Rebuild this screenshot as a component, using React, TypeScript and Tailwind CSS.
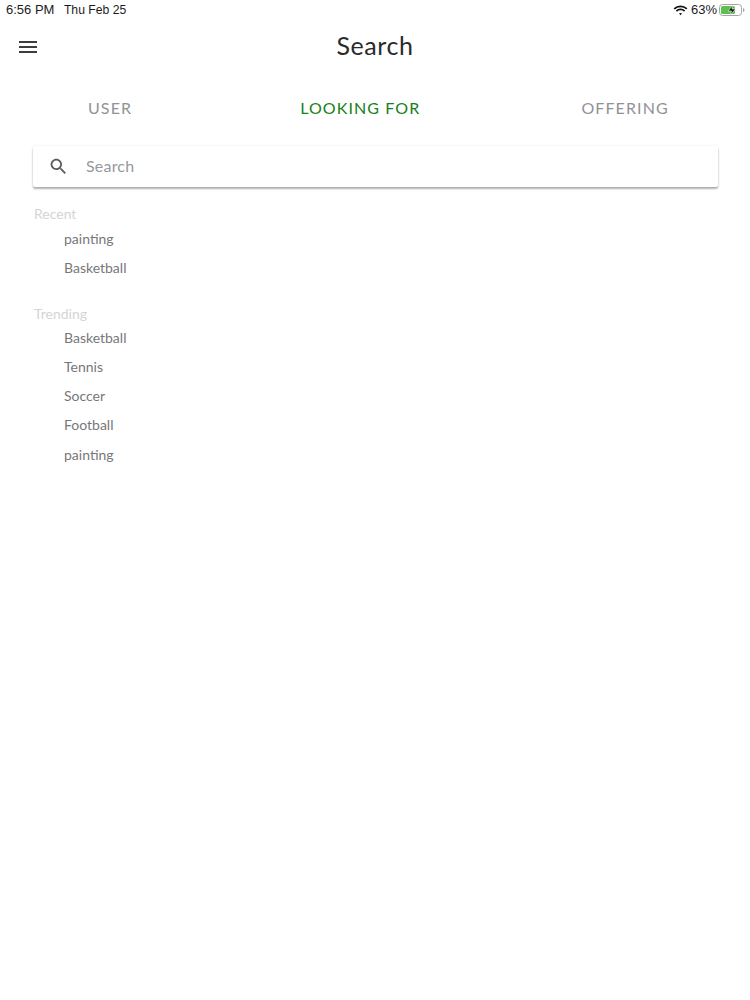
const recent = ["painting", "Basketball"];
const trending = ["Basketball", "Tennis", "Soccer", "Football", "painting"];

function WifiIcon() {
  return (
    <svg width="15" height="11" viewBox="0 0 15 11" fill="#111">
      <path d="M7.5 2.2c2.2 0 4.2.9 5.7 2.3l1.2-1.3A10 10 0 0 0 7.5.4 10 10 0 0 0 .6 3.2l1.2 1.3a8.200 8.200 0 0 1 5.700-2.300z" />
      <path d="M7.500 5.300c1.300 0 2.500.5 3.500 1.400l1.200-1.300a6.900 6.900 0 0 0-9.400 0L4 6.700a5 5 0 0 1 3.500-1.400z" />
      <path d="M7.500 8c-.6 0-1.100.2-1.500.6l1.500 1.700 1.500-1.700c-.4-.4-.9-.6-1.500-.6z" />
    </svg>
  );
}

function BatteryIcon() {
  return (
    <svg width="26" height="12" viewBox="0 0 26 12">
      <rect x="0.5" y="0.5" width="22" height="11" rx="3" fill="none" stroke="#a5a5a5" />
      <rect x="2" y="2" width="14" height="8" rx="1.500" fill="#5cc04f" />
      <path d="M24 4v4c.9-.3 1.500-1.100 1.500-2S24.900 4.300 24 4z" fill="#a5a5a5" />
      <path d="M14 1 9 7h3.500L11.500 11 16.500 5H13z" fill="#111" stroke="#fff" strokeWidth="0.600" />
    </svg>
  );
}

function MenuIcon() {
  return (
    <svg className="absolute left-[16px] top-[15px]" width="24" height="24" viewBox="0 0 24 24" fill="#3d3d40">
      <path d="M3 18h18v-2H3v2zm0-5h18v-2H3v2zm0-7v2h18V6H3z" />
    </svg>
  );
}

function SearchIcon() {
  return (
    <svg width="21" height="21" viewBox="0 0 24 24" fill="#5a5a5e">
      <path d="M15.5 14h-.79l-.28-.27C15.41 12.59 16 11.11 16 9.5 16 5.91 13.09 3 9.5 3S3 5.91 3 9.5 5.91 16 9.5 16c1.61 0 3.09-.59 4.23-1.57l.27.28v.79l5 4.99L20.490 19l-4.990-5zm-6 0C7.010 14 5 11.990 5 9.500S7.010 5 9.500 5 14 7.010 14 9.500 11.990 14 9.500 14z" />
    </svg>
  );
}

function Section({ title, items, listClass }: { title: string; items: string[]; listClass: string }) {
  return (
    <div>
      <div className="pl-[34px] text-[14px] leading-[20px] text-[#d4d4d6]">{title}</div>
      <ul className={listClass}>
        {items.map((item) => (
          <li key={item} className="h-[29.250px] text-[14px] leading-[29px] text-[#77777b]">
            {item}
          </li>
        ))}
      </ul>
    </div>
  );
}

export default function App() {
  return (
    <div className="h-[1000px] w-[750px] overflow-hidden bg-white font-['Lato','Open_Sans',sans-serif]">
      {/* Status bar */}
      <div className="flex h-[20px] items-center justify-between pl-[6px] pr-[5px] font-['Liberation_Sans',sans-serif] text-[13px] text-[#1c1c1e]">
        <div className="flex items-center gap-[9.500px]">
          <span>6:56 PM</span>
          <span className="text-[12.200px]">Thu Feb 25</span>
        </div>
        <div className="flex items-center">
          <WifiIcon />
          <span className="ml-[3px] mr-[2px]">63%</span>
          <BatteryIcon />
        </div>
      </div>

      {/* Header */}
      <div className="relative flex h-[52px] items-center justify-center">
        <MenuIcon />
        <h1 className="text-[25px] font-normal tracking-[0.6px] text-[#2a2a2d]">Search</h1>
      </div>

      {/* Tabs */}
      <div className="mt-[20px] flex h-[32px] items-center pl-[88px] text-[16px] tracking-[1.100px] text-[#929296]">
        <span>USER</span>
        <span className="ml-[168px] text-[#178017]">LOOKING FOR</span>
        <span className="ml-[161px]">OFFERING</span>
      </div>

      {/* Search box */}
      <div className="mx-[33px] mt-[22px] flex h-[41px] w-[685px] items-center rounded-[2px] bg-white pl-[15px] shadow-[0_2px_2px_rgba(0,0,0,0.3),0_0_3px_rgba(0,0,0,0.08)]">
        <SearchIcon />
        <span className="-mt-[2px] ml-[17px] text-[16px] tracking-[0.2px] text-[#98989c]">Search</span>
      </div>

      <div className="mt-[17px]">
        <Section title="Recent" items={recent} listClass="pl-[64px]" />
      </div>
      <div className="mt-[21px]">
        <Section title="Trending" items={trending} listClass="-mt-[1px] pl-[64px]" />
      </div>
    </div>
  );
}
